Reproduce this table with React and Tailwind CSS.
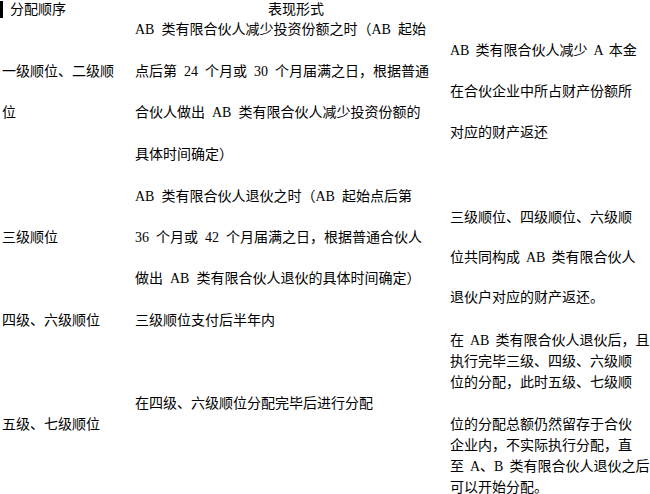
const font = '[font-family:"Liberation_Serif","Noto_Sans_CJK_SC",serif]';

function Line({ className = '', children }) {
  return <div className={`h-5 leading-5 whitespace-nowrap ${className}`}>{children}</div>;
}

export default function App() {
  return (
    <div className={`flex h-[494px] w-[650px] overflow-hidden bg-white text-[14px] text-black [word-spacing:3.5px] ${font}`}>
      {/* 分配顺序 */}
      <div className="flex w-[135px] shrink-0 flex-col pl-[2px]">
        <div className="-ml-[2px] flex h-5 items-start gap-[7px]">
          <span className="mt-px h-[17px] w-[3px] bg-black" />
          <span className="leading-5">分配顺序</span>
        </div>
        <Line className="mt-[42px]">一级顺位、二级顺</Line>
        <Line className="mt-[21px]">位</Line>
        <Line className="mt-[105px]">三级顺位</Line>
        <Line className="mt-[63px]">四级、六级顺位</Line>
        <Line className="mt-[84px]">五级、七级顺位</Line>
      </div>

      {/* 表现形式 */}
      <div className="flex w-[315px] shrink-0 flex-col">
        <Line className="pl-[133px]">表现形式</Line>
        <Line>AB 类有限合伙人减少投资份额之时（AB 起始</Line>
        <Line className="mt-[22px]">点后第 24 个月或 30 个月届满之日，根据普通</Line>
        <Line className="mt-[21px]">合伙人做出 AB 类有限合伙人减少投资份额的</Line>
        <Line className="mt-[22px]">具体时间确定）</Line>
        <Line className="mt-[22px]">AB 类有限合伙人退伙之时（AB 起始点后第</Line>
        <Line className="mt-[21px]">36 个月或 42 个月届满之日，根据普通合伙人</Line>
        <Line className="mt-[21px]">做出 AB 类有限合伙人退伙的具体时间确定）</Line>
        <Line className="mt-[22px]">三级顺位支付后半年内</Line>
        <Line className="mt-[63px]">在四级、六级顺位分配完毕后进行分配</Line>
      </div>

      {/* 分配内容 */}
      <div className="flex flex-1 flex-col [word-spacing:2.5px]">
        <Line className="mt-[41px]">AB 类有限合伙人减少 A 本金</Line>
        <Line className="mt-[21px]">在合伙企业中所占财产份额所</Line>
        <Line className="mt-[21px]">对应的财产返还</Line>
        <Line className="mt-[65px]">三级顺位、四级顺位、六级顺</Line>
        <Line className="mt-[20px]">位共同构成 AB 类有限合伙人</Line>
        <Line className="mt-[20px]">退伙户对应的财产返还。</Line>
        <div className="mt-[22px] leading-[21px] whitespace-nowrap">
          <div>在 AB 类有限合伙人退伙后，且</div>
          <div>执行完毕三级、四级、六级顺</div>
          <div>位的分配，此时五级、七级顺</div>
        </div>
        <div className="mt-[21px] leading-[21px] whitespace-nowrap">
          <div>位的分配总额仍然留存于合伙</div>
          <div>企业内，不实际执行分配，直</div>
          <div>至 A、B 类有限合伙人退伙之后</div>
          <div>可以开始分配。</div>
        </div>
      </div>
    </div>
  );
}
